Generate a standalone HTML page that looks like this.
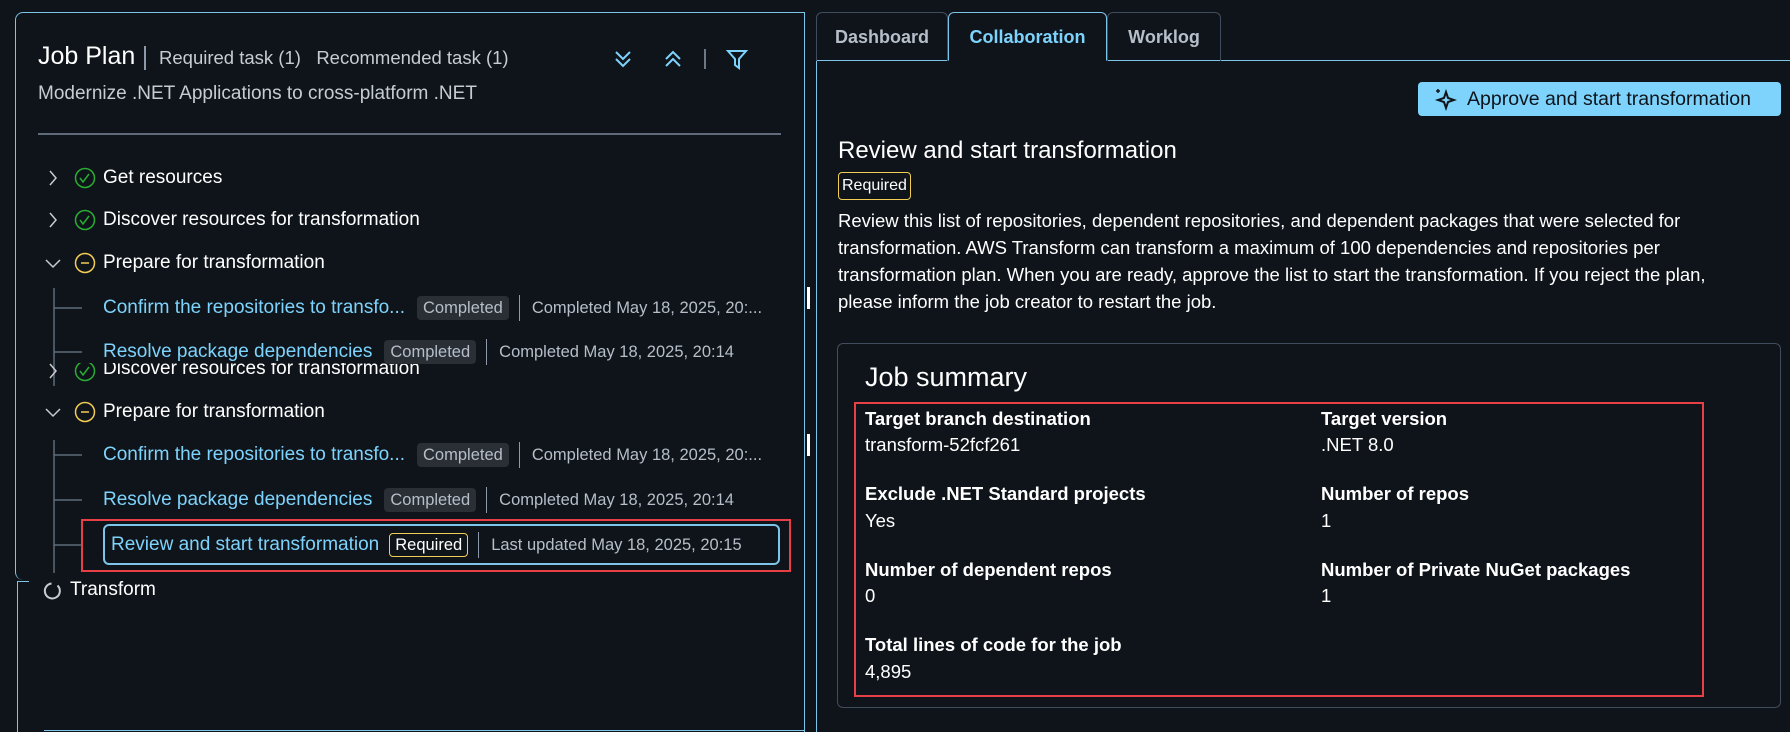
<!DOCTYPE html>
<html><head><meta charset="utf-8"><style>
*{margin:0;padding:0;box-sizing:border-box}
body{width:1790px;height:732px;background:#0f141a;font-family:"Liberation Sans",sans-serif;color:#e9ebed;position:relative;overflow:hidden}
.a{position:absolute;white-space:nowrap}
.row{font-size:19px;color:#fff}
.sub{position:absolute;left:103px;display:flex;align-items:center;white-space:nowrap;height:28px}
.link{color:#7dd3fc;font-size:19px}
.badge{font-size:16.5px;color:#b6bec9;background:#2a2f36;border-radius:4px;padding:2px 6px;line-height:20px;margin-left:12px}
.meta{font-size:16.5px;color:#b6bec9}
.vsep{width:1px;background:#8d99a8;height:26px;margin:0 12px 0 10px}
.lbl{font-weight:bold;font-size:18.5px;color:#fff}
.val{font-size:18.5px;color:#fff}
</style></head><body>
<div class="a" style="left:15px;top:12px;width:790px;height:568px;border:1px solid #7cc4e8;border-right:none;border-bottom:none;border-radius:8px 0 0 8px"></div>
<div class="a" style="left:804px;top:12px;width:1px;height:720px;background:#7cc4e8"></div>
<div class="a" style="left:17px;top:581px;width:1px;height:151px;background:#7cc4e8"></div>
<div class="a" style="left:17px;top:581px;width:12px;height:1px;background:#7cc4e8"></div>
<div class="a" style="left:44px;top:730px;width:761px;height:1px;background:#7cc4e8"></div>

<div class="a" style="left:38px;top:42px;font-size:25px;color:#fff">Job Plan</div>
<div class="a" style="left:144px;top:46px;width:2px;height:24px;background:#8d99a8"></div>
<div class="a" style="left:159px;top:47px;font-size:18.5px;color:#c6ccd4">Required task (1)&nbsp;&nbsp; Recommended task (1)</div>
<svg class="a" style="left:614px;top:48px" width="140" height="22" viewBox="0 0 140 22" fill="none" stroke="#7dd3fc" stroke-width="2">
<path d="M2 4l7 7 7-7M2 11l7 7 7-7"/><path d="M52 11l7-7 7 7M52 18l7-7 7 7"/>
<line x1="91" y1="1" x2="91" y2="21" stroke="#8d99a8" stroke-width="1.5"/>
<path d="M114 3h18l-7 8v9l-4-3v-6z"/></svg>
<div class="a" style="left:38px;top:83px;font-size:19px;color:#c6ccd4">Modernize .NET Applications to cross-platform .NET</div>
<div class="a" style="left:38px;top:133px;width:743px;height:2px;background:#5f6b7a"></div>

<svg class="a" style="left:0;top:0" width="110" height="732" fill="none" stroke-width="1.5">
<g stroke="#c6ccd4"><path d="M50 171l6 7-6 7M50 213l6 7-6 7M46 260l7 7 7-7M46 409l7 7 7-7"/></g>
<g stroke="#29ad32"><circle cx="85" cy="178" r="9.5"/><path d="M80 178l3 4 6-8"/><circle cx="85" cy="220" r="9.5"/><path d="M80 220l3 4 6-8"/></g>
<g stroke="#f2cd54"><circle cx="85" cy="263" r="9.5"/><path d="M81 263h8"/><circle cx="85" cy="412" r="9.5"/><path d="M81 412h8"/></g>
<g stroke="#5f6b7a"><path d="M54 288v98M54 440v133M54 308h28M54 352h28M54 455h28M54 500h28M54 545h28"/></g>
<path d="M57.5 585.5a7.5 7.5 0 1 1 -6 -2" stroke="#c6ccd4" stroke-width="2"/>
</svg>
<div class="a row" style="left:103px;top:167px">Get resources</div>
<div class="a row" style="left:103px;top:209px">Discover resources for transformation</div>
<div class="a row" style="left:103px;top:252px">Prepare for transformation</div>

<div class="a" style="left:0;top:363px;width:700px;height:21px;overflow:hidden">
<svg class="a" style="left:0;top:-7px" width="110" height="40" fill="none" stroke-width="1.5"><path d="M50 8l6 7-6 7" stroke="#c6ccd4"/><circle cx="85" cy="15" r="9.5" stroke="#29ad32"/><path d="M80 15l3 4 6-8" stroke="#29ad32"/></svg>
<div class="a row" style="left:103px;top:-5px">Discover resources for transformation</div>
</div>

<div class="sub" style="top:294px"><span class="link">Confirm the repositories to transfo...</span><span class="badge">Completed</span><span class="vsep"></span><span class="meta">Completed May 18, 2025, 20:...</span></div>
<div class="sub" style="top:338px"><span class="link">Resolve package dependencies</span><span class="badge">Completed</span><span class="vsep"></span><span class="meta">Completed May 18, 2025, 20:14</span></div>
<div class="a row" style="left:103px;top:401px">Prepare for transformation</div>
<div class="sub" style="top:441px"><span class="link">Confirm the repositories to transfo...</span><span class="badge">Completed</span><span class="vsep"></span><span class="meta">Completed May 18, 2025, 20:...</span></div>
<div class="sub" style="top:486px"><span class="link">Resolve package dependencies</span><span class="badge">Completed</span><span class="vsep"></span><span class="meta">Completed May 18, 2025, 20:14</span></div>
<div class="a" style="left:81px;top:519px;width:710px;height:53px;border:2px solid #e83e45"></div>
<div class="a" style="left:103px;top:524px;width:677px;height:41px;border:2px solid #7cc4e8;border-radius:6px"></div>
<div class="sub" style="left:111px;top:531px"><span class="link">Review and start transformation</span><span style="margin-left:10px;border:1px solid #f2cd54;border-radius:4px;padding:1px 5px;font-size:16.5px;color:#fff;line-height:20px">Required</span><span class="vsep"></span><span class="meta">Last updated May 18, 2025, 20:15</span></div>
<div class="a row" style="left:70px;top:579px">Transform</div>

<div class="a" style="left:807px;top:287px;width:3px;height:22px;background:#fff"></div>
<div class="a" style="left:807px;top:434px;width:3px;height:22px;background:#fff"></div>

<div class="a" style="left:816px;top:60px;width:974px;height:672px;border-left:1px solid #7cc4e8;border-top:1px solid #7cc4e8"></div>
<div class="a" style="left:816px;top:12px;width:132px;height:49px;border:1px solid #414d5c;border-bottom:none;border-radius:6px 6px 0 0;font-size:18px;font-weight:bold;color:#b6bec9;text-align:center;line-height:48px">Dashboard</div>
<div class="a" style="left:948px;top:12px;width:159px;height:49px;border:1px solid #7cc4e8;border-bottom:1px solid #0f141a;border-radius:6px 6px 0 0;background:#0f141a;font-size:18px;font-weight:bold;color:#7dd3fc;text-align:center;line-height:48px">Collaboration</div>
<div class="a" style="left:1107px;top:12px;width:114px;height:49px;border:1px solid #414d5c;border-bottom:none;border-radius:6px 6px 0 0;font-size:18px;font-weight:bold;color:#b6bec9;text-align:center;line-height:48px">Worklog</div>

<div class="a" style="left:1418px;top:82px;width:363px;height:34px;background:#7dd3fc;border-radius:4px;color:#0f141a;font-size:19.5px;line-height:34px;padding-left:49px">Approve and start transformation</div>
<svg class="a" style="left:1433px;top:87px" width="24" height="24" viewBox="0 0 24 24" fill="none" stroke="#0f141a" stroke-width="2"><path d="M13 5l2 6 6 2-6 2-2 6-2-6-6-2 6-2z"/><path d="M5 2v4M3 4h4" stroke-width="1.5"/></svg>

<div class="a" style="left:838px;top:137px;font-size:24px;color:#fff">Review and start transformation</div>
<div class="a" style="left:838px;top:172px;border:1px solid #f2cd54;border-radius:4px;padding:3px 3px;font-size:16px;color:#fff;line-height:20px">Required</div>
<div class="a" style="left:838px;top:207px;width:915px;white-space:normal;font-size:18.5px;line-height:27px;color:#fff">Review this list of repositories, dependent repositories, and dependent packages that were selected for transformation. AWS Transform can transform a maximum of 100 dependencies and repositories per transformation plan. When you are ready, approve the list to start the transformation. If you reject the plan, please inform the job creator to restart the job.</div>

<div class="a" style="left:837px;top:343px;width:944px;height:365px;border:1px solid #414d5c;border-radius:6px"></div>
<div class="a" style="left:865px;top:362px;font-size:27px;color:#fff">Job summary</div>
<div class="a" style="left:854px;top:402px;width:850px;height:295px;border:2px solid #e83e45"></div>
<div class="a lbl" style="left:865px;top:408px">Target branch destination</div>
<div class="a val" style="left:865px;top:434px">transform-52fcf261</div>
<div class="a lbl" style="left:1321px;top:408px">Target version</div>
<div class="a val" style="left:1321px;top:434px">.NET 8.0</div>
<div class="a lbl" style="left:865px;top:483px">Exclude .NET Standard projects</div>
<div class="a val" style="left:865px;top:510px">Yes</div>
<div class="a lbl" style="left:1321px;top:483px">Number of repos</div>
<div class="a val" style="left:1321px;top:510px">1</div>
<div class="a lbl" style="left:865px;top:559px">Number of dependent repos</div>
<div class="a val" style="left:865px;top:585px">0</div>
<div class="a lbl" style="left:1321px;top:559px">Number of Private NuGet packages</div>
<div class="a val" style="left:1321px;top:585px">1</div>
<div class="a lbl" style="left:865px;top:634px">Total lines of code for the job</div>
<div class="a val" style="left:865px;top:661px">4,895</div>
</body></html>
